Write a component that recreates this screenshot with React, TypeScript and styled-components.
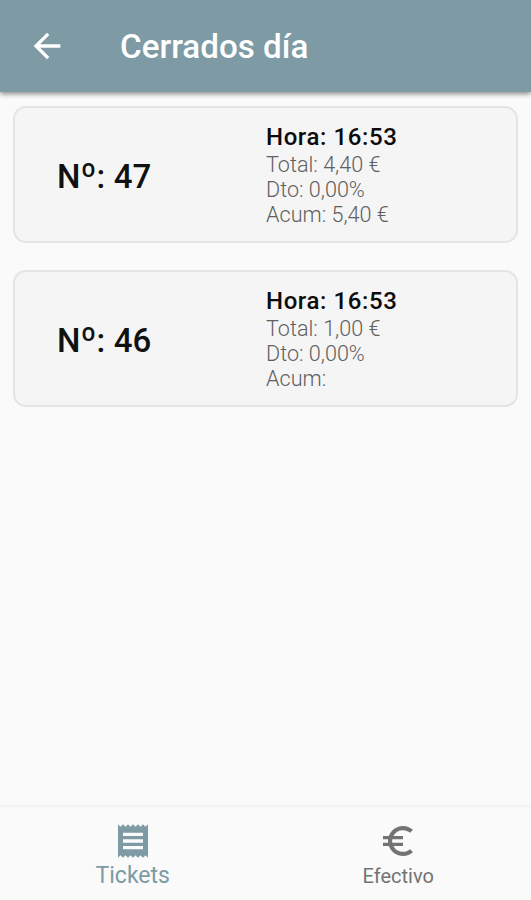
import React from 'react';
import styled, { createGlobalStyle } from 'styled-components';
import { MdArrowBack, MdReceipt, MdEuroSymbol } from 'react-icons/md';

const GlobalStyle = createGlobalStyle`
  * { box-sizing: border-box; }
  body { margin: 0; font-family: Roboto, sans-serif; background: #fafafa; }
`;

const Screen = styled.div`
  height: 900px;
  display: flex;
  flex-direction: column;
  background: #fafafa;
`;

const AppBar = styled.header`
  height: 92px;
  flex: none;
  display: flex;
  align-items: center;
  padding: 0 27px;
  background: #7e9ba5;
  color: #fff;
  box-shadow: 0 2px 5px rgba(0, 0, 0, 0.45);
`;

const BackButton = styled.button`
  display: flex;
  width: 93px;
  padding: 0;
  border: 0;
  background: none;
  color: inherit;
  font-size: 40px;
`;

const Title = styled.h1`
  margin: 2px 0 0;
  font-size: 33.2px;
  line-height: 40px;
  font-weight: 500;
`;

const TicketList = styled.main`
  flex: 1;
  display: flex;
  flex-direction: column;
  gap: 27px;
  padding: 14px 13px;
`;

const Card = styled.article`
  height: 137px;
  display: grid;
  grid-template-columns: 209px 1fr;
  padding: 0 0 0 42px;
  border: 2px solid #e4e4e4;
  border-radius: 13px;
  background: #f5f5f5;
`;

const TicketNumber = styled.h2`
  margin: 4px 0 0;
  align-self: center;
  font-size: 33px;
  line-height: 40px;
  font-weight: 500;
  letter-spacing: 0.1px;
  color: #111;
`;

const Ordinal = styled.span`
  font-size: 35px;
  line-height: 1;
  font-weight: 400;
`;

const Details = styled.div`
  padding-top: 15px;
`;

const Time = styled.div`
  font-size: 24px;
  line-height: 29px;
  font-weight: 500;
  letter-spacing: 0.6px;
  color: #0c0c0c;
`;

const Detail = styled.div`
  font-size: 21.6px;
  line-height: 25px;
  font-weight: 300;
  color: #606060;
`;

const BottomNav = styled.nav`
  height: 95px;
  flex: none;
  display: grid;
  grid-template-columns: 1fr 1fr;
  border-top: 2px solid #f3f3f3;
`;

const Tab = styled.button<{ $active?: boolean }>`
  display: flex;
  flex-direction: column;
  align-items: center;
  padding: 14px 0 0;
  border: 0;
  background: none;
  font-family: inherit;
  font-size: ${(p) => (p.$active ? 23 : 20)}px;
  line-height: 30px;
  color: ${(p) => (p.$active ? '#7e9ba5' : '#737373')};
  svg { font-size: 40px; }
`;

const tickets = [
  { number: 47, time: '16:53', total: '4,40 €', discount: '0,00%', accumulated: '5,40 €' },
  { number: 46, time: '16:53', total: '1,00 €', discount: '0,00%', accumulated: '' },
];

export default function App() {
  return (
    <>
      <GlobalStyle />
      <Screen>
        <AppBar>
          <BackButton aria-label="Atrás"><MdArrowBack /></BackButton>
          <Title>Cerrados día</Title>
        </AppBar>
        <TicketList>
          {tickets.map((t) => (
            <Card key={t.number}>
              <TicketNumber>N<Ordinal>º</Ordinal>: {t.number}</TicketNumber>
              <Details>
                <Time>Hora: {t.time}</Time>
                <Detail>Total: {t.total}</Detail>
                <Detail>Dto: {t.discount}</Detail>
                <Detail>Acum: {t.accumulated}</Detail>
              </Details>
            </Card>
          ))}
        </TicketList>
        <BottomNav>
          <Tab $active><MdReceipt />Tickets</Tab>
          <Tab><MdEuroSymbol />Efectivo</Tab>
        </BottomNav>
      </Screen>
    </>
  );
}
